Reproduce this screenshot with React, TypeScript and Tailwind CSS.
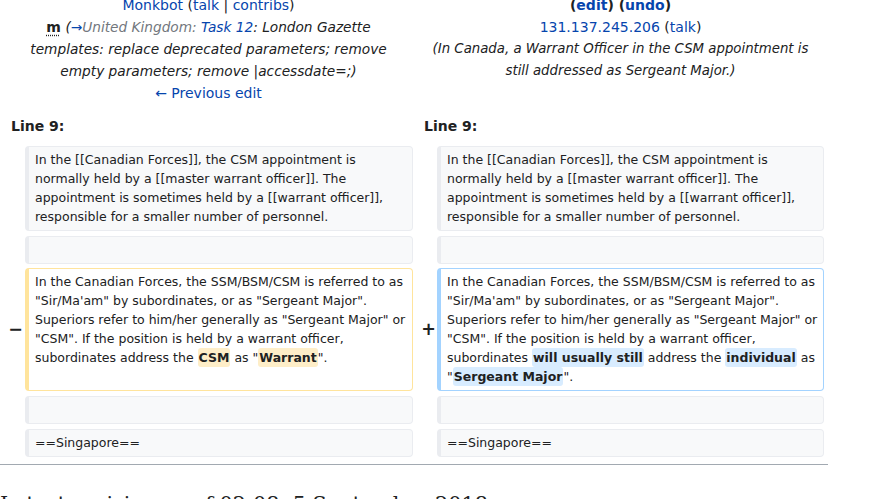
import React from "react";

const link = "text-[#0645ad]";

function Box({
  kind,
  children,
}: {
  kind: "ctx" | "del" | "add";
  children?: React.ReactNode;
}) {
  const cls =
    kind === "ctx"
      ? "bg-[#f8f9fa] border-[#eaecf0]"
      : kind === "del"
      ? "bg-white border-[#ffe49c]"
      : "bg-white border-[#a3d3ff]";
  return (
    <div
      className={`${cls} border border-l-4 rounded-[4px] pl-[6px] pr-[6px] pt-[3px] pb-[4px] text-[12.5px] leading-[19px] whitespace-nowrap min-h-[28px]`}
    >
      {children}
    </div>
  );
}

function Del({ children }: { children: React.ReactNode }) {
  return (
    <span className="bg-[#feeec8] font-bold rounded-[3px] py-[2px] px-[1px]">
      {children}
    </span>
  );
}

function Ins({ children }: { children: React.ReactNode }) {
  return (
    <span className="bg-[#d8ecff] font-bold rounded-[3px] py-[2px] px-[1px]">
      {children}
    </span>
  );
}

const row = "grid grid-cols-[17px_388px_16px_387px] gap-x-[4px]";

export default function App() {
  return (
    <div className="w-[874px] h-[499px] overflow-hidden bg-white text-[#202122] font-['DejaVu_Sans',sans-serif]">
      <div className="w-[828px]">
        <div className="px-[4px]">
          {/* Header */}
          <div className="grid grid-cols-[409px_407px] gap-x-[4px] -mt-[6px] text-center text-[14px] leading-[22px]">
            <div>
              <div className="h-[22px]">
                <span className={link}>Monkbot</span> (<span className={link}>talk</span> |{" "}
                <span className={link}>contribs</span>)
              </div>
              <div className="h-[22px]">
                <span className="font-bold underline decoration-dotted underline-offset-[3px]">m</span>{" "}
                <span className="italic text-[13.7px]">
                  (<span className="text-[#72777d]"><span className={link}>→</span>United Kingdom:</span>{" "}
                  <span className={link}>Task 12</span>: London Gazette
                </span>
              </div>
              <div className="h-[22px] italic text-[13.7px]">templates: replace deprecated parameters; remove</div>
              <div className="h-[22px] italic text-[13.7px]">empty parameters; remove |accessdate=;)</div>
              <div className="h-[22px]">
                <span className={link}>← Previous edit</span>
              </div>
            </div>
            <div>
              <div className="h-[22px] font-bold">
                (<span className={link}>edit</span>) (<span className={link}>undo</span>)
              </div>
              <div className="h-[22px]">
                <span className={link}>131.137.245.206</span> (<span className={link}>talk</span>)
              </div>
              <div className="h-[22px] italic text-[13.3px]">(In Canada, a Warrant Officer in the CSM appointment is</div>
              <div className="h-[22px] italic text-[13.3px]">still addressed as Sergeant Major.)</div>
            </div>
          </div>

          {/* Line numbers */}
          <div className="grid grid-cols-[409px_407px] gap-x-[4px] mt-[11px] text-[14px] leading-[22px] font-bold">
            <div className="pl-[7px]">Line 9:</div>
            <div className="pl-[7px]">Line 9:</div>
          </div>

          {/* Row 1 */}
          <div className={`${row} mt-[9px]`}>
            <div />
            <Box kind="ctx">
              In the [[Canadian Forces]], the CSM appointment is
              <br />
              normally held by a [[master warrant officer]]. The
              <br />
              appointment is sometimes held by a [[warrant officer]],
              <br />
              responsible for a smaller number of personnel.
            </Box>
            <div />
            <Box kind="ctx">
              In the [[Canadian Forces]], the CSM appointment is
              <br />
              normally held by a [[master warrant officer]]. The
              <br />
              appointment is sometimes held by a [[warrant officer]],
              <br />
              responsible for a smaller number of personnel.
            </Box>
          </div>

          {/* Row 2 */}
          <div className={`${row} mt-[5px]`}>
            <div />
            <Box kind="ctx" />
            <div />
            <Box kind="ctx" />
          </div>

          {/* Row 3 changed */}
          <div className={`${row} mt-[4px]`}>
            <div className="flex items-center justify-end font-bold text-[17.5px] leading-none -mr-[2px]">−</div>
            <Box kind="del">
              In the Canadian Forces, the SSM/BSM/CSM is referred to as
              <br />
              "Sir/Ma'am" by subordinates, or as "Sergeant Major".
              <br />
              Superiors refer to him/her generally as "Sergeant Major" or
              <br />
              "CSM". If the position is held by a warrant officer,
              <br />
              subordinates address the <Del>CSM</Del> as "<Del>Warrant</Del>".
            </Box>
            <div className="flex items-center justify-end font-bold text-[17.5px] leading-none -mr-[3px]">+</div>
            <Box kind="add">
              In the Canadian Forces, the SSM/BSM/CSM is referred to as
              <br />
              "Sir/Ma'am" by subordinates, or as "Sergeant Major".
              <br />
              Superiors refer to him/her generally as "Sergeant Major" or
              <br />
              "CSM". If the position is held by a warrant officer,
              <br />
              subordinates <Ins>will usually still</Ins> address the <Ins>individual</Ins> as
              <br />"<Ins>Sergeant Major</Ins>".
            </Box>
          </div>

          {/* Row 4 */}
          <div className={`${row} mt-[5px]`}>
            <div />
            <Box kind="ctx" />
            <div />
            <Box kind="ctx" />
          </div>

          {/* Row 5 */}
          <div className={`${row} mt-[5px]`}>
            <div />
            <Box kind="ctx">==Singapore==</Box>
            <div />
            <Box kind="ctx">==Singapore==</Box>
          </div>
        </div>

        <div className="mt-[7px] h-px bg-[#a2a9b1]" />

        <div className="mt-[26px] font-['DejaVu_Serif',serif] text-[20.8px] leading-[1.3] whitespace-nowrap">
          Latest revision as of 02:08, 5 September 2018
        </div>
      </div>
    </div>
  );
}
